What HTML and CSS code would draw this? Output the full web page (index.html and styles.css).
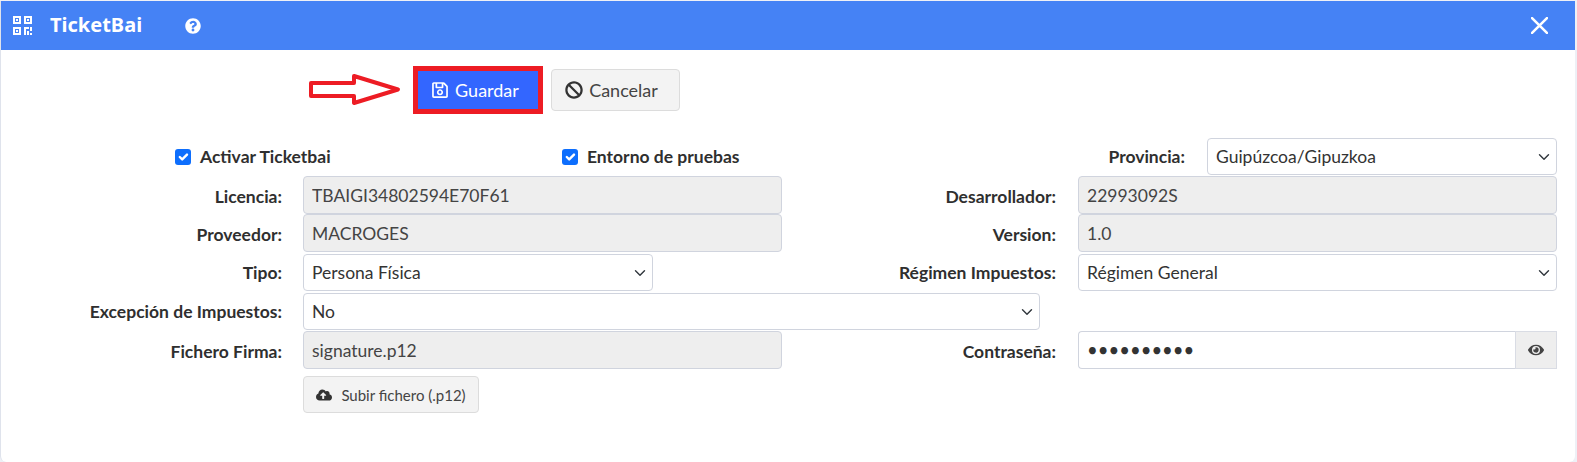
FILE: index.html
```html
<!DOCTYPE html>
<html lang="es">
<head>
<meta charset="utf-8">
<title>TicketBai</title>
<link rel="stylesheet" href="styles.css">
</head>
<body>
<div class="card">
  <header class="head">
    <svg class="qr" viewBox="0 0 19 19" aria-hidden="true"><path fill-rule="evenodd" d="M0 0h8v8H0zM2 2v4h4V2zM11 0h8v8h-8zM13 2v4h4V2zM0 11h8v8H0zM2 13v4h4v-4z"/><path d="M3 3h2v2H3zM14 3h2v2h-2zM3 14h2v2H3zM11 11h5v2h-3v6h-2zM15 13h2v2h2v-4h-2v2zM14 15h2v2h-2zM14 17h2v2h-2zM17 17h2v2h-2z"/></svg>
    <span class="title">TicketBai</span>
    <svg class="help" viewBox="0 0 512 512" aria-hidden="true"><path d="M504 256c0 136.997-111.043 248-248 248S8 392.997 8 256C8 119.083 119.043 8 256 8s248 111.083 248 248zM262.655 90c-54.497 0-89.255 22.957-116.549 63.758-3.536 5.286-2.353 12.415 2.715 16.258l34.699 26.31c5.205 3.947 12.621 3.008 16.665-2.122 17.864-22.658 30.113-35.797 57.303-35.797 20.429 0 45.698 13.148 45.698 32.958 0 14.976-12.363 22.667-32.534 33.976C247.128 238.528 216 254.941 216 296v4c0 6.627 5.373 12 12 12h56c6.627 0 12-5.373 12-12v-1.333c0-28.462 83.186-29.647 83.186-106.667 0-58.002-60.165-102-116.531-102zM256 338c-25.365 0-46 20.635-46 46 0 25.364 20.635 46 46 46s46-20.636 46-46c0-25.365-20.635-46-46-46z"/></svg>
    <svg class="close" viewBox="0 0 16 16" aria-hidden="true"><path d="M1 1l14 14M15 1L1 15"/></svg>
  </header>

  <div class="toolbar">
    <svg class="arrow" viewBox="0 0 94 34" aria-hidden="true"><path d="M2 10H45V3L89 16.500 45 30V23H2z"/></svg>
    <div class="save-frame">
      <button class="btn btn-primary" type="button">
        <svg class="ico" viewBox="0 0 448 512" aria-hidden="true"><path d="M433.941 129.941l-83.882-83.882A48 48 0 0 0 316.118 32H48C21.49 32 0 53.49 0 80v352c0 26.51 21.49 48 48 48h352c26.51 0 48-21.49 48-48V163.882a48 48 0 0 0-14.059-33.941zM272 80v80H144V80h128zm122 352H54a6 6 0 0 1-6-6V86a6 6 0 0 1 6-6h42v104c0 13.255 10.745 24 24 24h176c13.255 0 24-10.745 24-24V83.882l78.243 78.243a6 6 0 0 1 1.757 4.243V426a6 6 0 0 1-6 6zM224 232c-48.523 0-88 39.477-88 88s39.477 88 88 88 88-39.477 88-88-39.477-88-88-88zm0 128c-22.056 0-40-17.944-40-40s17.944-40 40-40 40 17.944 40 40-17.944 40-40 40z"/></svg>
        Guardar
      </button>
    </div>
    <button class="btn btn-light" type="button">
      <svg class="ico" viewBox="0 0 512 512" aria-hidden="true"><path d="M256 8C119.034 8 8 119.033 8 256s111.034 248 248 248 248-111.034 248-248S392.967 8 256 8zm130.108 117.892c65.448 65.448 70 165.481 20.677 235.637L150.47 105.216c70.204-49.356 170.226-44.735 235.638 20.676zM125.892 386.108c-65.448-65.448-70-165.481-20.677-235.637L361.53 406.784c-70.203 49.356-170.226 44.736-235.638-20.676z"/></svg>
      Cancelar
    </button>
  </div>

  <form class="form">
    <div class="row row-sel">
      <label class="check check-a"><input type="checkbox" checked>Activar Ticketbai</label>
      <label class="check check-b"><input type="checkbox" checked>Entorno de pruebas</label>
      <label class="lbl lbl-prov">Provincia:</label>
      <select class="ctl w-prov"><option>Guipúzcoa/Gipuzkoa</option></select>
    </div>
    <div class="row row-after-sel">
      <label class="lbl">Licencia:</label>
      <input class="ctl w-main" disabled value="TBAIGI34802594E70F61">
      <label class="lbl lbl-r">Desarrollador:</label>
      <input class="ctl w-right" disabled value="22993092S">
    </div>
    <div class="row">
      <label class="lbl">Proveedor:</label>
      <input class="ctl w-main" disabled value="MACROGES">
      <label class="lbl lbl-r">Version:</label>
      <input class="ctl w-right" disabled value="1.0">
    </div>
    <div class="row row-sel row-gap">
      <label class="lbl">Tipo:</label>
      <select class="ctl w-tipo"><option>Persona Física</option></select>
      <label class="lbl lbl-r lbl-r-tipo">Régimen Impuestos:</label>
      <select class="ctl w-right"><option>Régimen General</option></select>
    </div>
    <div class="row row-sel row-gap">
      <label class="lbl">Excepción de Impuestos:</label>
      <select class="ctl w-exc"><option>No</option></select>
    </div>
    <div class="row row-after-sel">
      <label class="lbl">Fichero Firma:</label>
      <input class="ctl w-main" disabled value="signature.p12">
      <label class="lbl lbl-r">Contraseña:</label>
      <div class="group w-right">
        <input class="ctl pass" type="password" value="1234567890">
        <span class="addon"><svg class="ico-eye" viewBox="0 0 576 512" aria-hidden="true"><path d="M572.52 241.4C518.29 135.59 410.93 64 288 64S57.68 135.64 3.48 241.41a32.35 32.35 0 0 0 0 29.19C57.71 376.41 165.07 448 288 448s230.32-71.64 284.52-177.41a32.35 32.35 0 0 0 0-29.19zM288 400a144 144 0 1 1 144-144 143.93 143.93 0 0 1-144 144zm0-240a95.31 95.31 0 0 0-25.31 3.79 47.85 47.85 0 0 1-66.9 66.9A95.78 95.78 0 1 0 288 160z"/></svg></span>
      </div>
    </div>
    <div class="upload-row">
      <button class="btn-upload" type="button">
        <svg class="ico-cloud" viewBox="0 0 640 512" aria-hidden="true"><path d="M537.6 226.6c4.1-10.7 6.4-22.4 6.400-34.600 0-53-43-96-96-96-19.700 0-38.100 6-53.300 16.200C367 64.200 315.300 32 256 32c-88.400 0-160 71.600-160 160 0 2.700.1 5.400.2 8.100C40.200 219.800 0 273.200 0 336c0 79.500 64.500 144 144 144h368c70.700 0 128-57.300 128-128 0-61.900-44-113.600-102.400-125.400zM393.400 288H328v112c0 8.800-7.200 16-16 16h-48c-8.800 0-16-7.200-16-16V288h-65.400c-14.300 0-21.400-17.200-11.300-27.300l105.400-105.400c6.200-6.200 16.400-6.200 22.600 0l105.400 105.400c10.100 10.100 2.900 27.300-11.300 27.300z"/></svg>
        Subir fichero (.p12)
      </button>
    </div>
  </form>
</div>
</body>
</html>
```

FILE: styles.css
```css
* { box-sizing: border-box; }
html, body { height: 100%; }
body {
  margin: 0;
  background: #eef0f6;
  font-family: "Lato", "Liberation Sans", sans-serif;
  font-size: 17.5px;
  color: #333;
  overflow: hidden;
}
.card {
  width: 1575px;
  height: 461px;
  margin-top: 1px;
  background: #fff;
  border-left: 1px solid #dfe3ec;
  border-radius: 0 0 6px 6px;
}
.head {
  height: 49px;
  background: #4582f5;
  color: #fff;
  display: flex;
  align-items: center;
  padding-left: 12px;
}
.qr { width: 19px; height: 19px; fill: #fff; flex: none; }
.title {
  font-family: "Noto Sans", "Open Sans", sans-serif;
  font-weight: 700;
  font-size: 20px;
  margin-left: 18px;
  padding-bottom: 2px;
  width: 135px;
}
.help { width: 16px; height: 16px; fill: #fff; }
.close {
  width: 17px;
  height: 17px;
  margin-left: auto;
  margin-right: 27px;
  stroke: #fff;
  stroke-width: 2.4;
  fill: none;
  stroke-linecap: round;
}
.toolbar {
  display: flex;
  align-items: center;
  height: 48px;
  margin-top: 16px;
  padding-left: 308px;
}
.arrow {
  width: 94px;
  height: 34px;
  fill: #fff;
  stroke: #ed1c24;
  stroke-width: 4;
  stroke-linejoin: round;
  flex: none;
}
.save-frame {
  margin-left: 10px;
  width: 130px;
  height: 48px;
  border: 5px solid #ed1c24;
}
.btn {
  font-family: inherit;
  font-size: 18px;
  display: inline-flex;
  align-items: center;
  justify-content: center;
  gap: 6px;
}
.btn-primary {
  width: 100%;
  height: 100%;
  padding: 0 6px 0 0;
  background: #3366ff;
  border: 0;
  color: #fff;
}
.btn-primary .ico { fill: #fff; }
.btn-light {
  width: 129px;
  height: 42px;
  margin-left: 8px;
  padding: 0 8px 0 0;
  background: #f3f3f3;
  border: 1px solid #dcdcdc;
  border-radius: 4px;
  color: #444;
}
.btn-light .ico { fill: #333; }
.ico { width: 18px; height: 18px; flex: none; }

.form { margin-top: 24px; }
.row {
  display: flex;
  align-items: center;
  height: 38px;
  padding-right: 18px;
}
.row .lbl { padding-top: 2px; }
.row-sel { height: 37px; }
.row.row-sel .lbl { padding-top: 0; }
.row-after-sel { margin-top: 1px; }
.row-gap { margin-top: 2px; }
.lbl {
  width: 281px;
  text-align: right;
  font-weight: 700;
  flex: none;
  margin-right: 21px;
  white-space: nowrap;
  color: #2f2f2f;
}
.lbl-r { width: 274px; margin-right: 22px; }
.lbl-r-tipo { width: 403px; }
.lbl-prov { width: 0; flex: 1; margin-right: 22px; }
.check {
  display: flex;
  align-items: center;
  gap: 9px;
  font-weight: 700;
  color: #2f2f2f;
  flex: none;
}
.check input {
  appearance: none;
  width: 16px;
  height: 16px;
  margin: 0;
  flex: none;
  border-radius: 3px;
  background: #0d6efd url("data:image/svg+xml,%3csvg xmlns='http://www.w3.org/2000/svg' viewBox='0 0 20 20'%3e%3cpath fill='none' stroke='%23fff' stroke-linecap='round' stroke-linejoin='round' stroke-width='3' d='M6 10l3 3l6-6'/%3e%3c/svg%3e") center/100% no-repeat;
}
.check-a { margin-left: 174px; width: 387px; }
.check-b { width: 300px; }
.ctl {
  height: 38px;
  border: 1px solid #d0d4de;
  border-radius: 4px;
  padding: 0 8px;
  font-family: inherit;
  font-size: 17.5px;
  color: #333;
  background-color: #fff;
  flex: none;
}
.ctl:disabled { background: #eee; opacity: 1; color: #444; -webkit-text-fill-color: #444; }
select.ctl {
  height: 37px;
  appearance: none;
  background: #fff url("data:image/svg+xml,%3csvg xmlns='http://www.w3.org/2000/svg' viewBox='0 0 16 16'%3e%3cpath fill='none' stroke='%23343a40' stroke-linecap='round' stroke-linejoin='round' stroke-width='1.900' d='M2 5l6 6 6-6'/%3e%3c/svg%3e") right 6px center/12px 12px no-repeat;
}
.w-main { width: 479px; }
.w-right { width: 479px; }
.w-prov { width: 350px; }
.w-tipo { width: 350px; }
.w-exc { width: 737px; }
.group { display: flex; height: 38px; flex: none; }
.pass {
  flex: 1;
  min-width: 0;
  width: auto;
  border-radius: 4px 0 0 4px;
  border-right: 0;
  font-size: 18.5px;
}
.addon {
  width: 42px;
  background: #eee;
  border: 1px solid #d9dce4;
  display: flex;
  align-items: center;
  justify-content: center;
}
.ico-eye { width: 16px; height: 16px; fill: #444; }
.upload-row { margin-top: 7px; padding-left: 302px; }
.btn-upload {
  width: 176px;
  height: 37px;
  background: #f3f3f3;
  border: 1px solid #dcdcdc;
  border-radius: 4px;
  font-family: inherit;
  font-size: 15px;
  color: #444;
  display: flex;
  align-items: center;
  justify-content: center;
  gap: 9px;
}
.ico-cloud { width: 16px; height: 14px; fill: #333; }
```
